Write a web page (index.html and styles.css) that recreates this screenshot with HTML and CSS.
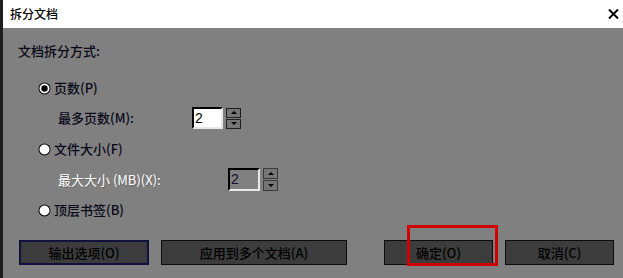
FILE: index.html
```html
<!DOCTYPE html>
<html>
<head>
<meta charset="utf-8">
<link rel="stylesheet" href="styles.css">
</head>
<body>
<div class="window">
  <div class="titlebar">
    <span class="title">拆分文档</span>
    <svg class="close" width="11" height="10" viewBox="0 0 11 10"><path d="M1 0.5 L10 9.5 M10 0.5 L1 9.5" stroke="#000" stroke-width="2" fill="none"/></svg>
  </div>
  <div class="content">
    <div class="heading">文档拆分方式:</div>
    <div class="radio-row r1">
      <svg class="radio" width="13" height="13" viewBox="0 0 13 13"><circle cx="6.5" cy="6.5" r="6" fill="#000"/><circle cx="6.5" cy="6.5" r="5" fill="#fff"/><circle cx="6.5" cy="6.5" r="3.2" fill="#000"/></svg>
      <span class="label">页数(P)</span>
    </div>
    <div class="spin-row s1">
      <span class="spin-label">最多页数(M):</span>
      <div class="input">2</div>
      <div class="spinner">
        <div class="sbtn"><span class="tri up"></span></div>
        <div class="sbtn"><span class="tri down"></span></div>
      </div>
    </div>
    <div class="radio-row r2">
      <svg class="radio" width="13" height="13" viewBox="0 0 13 13"><circle cx="6.5" cy="6.5" r="6" fill="#000"/><circle cx="6.5" cy="6.5" r="5" fill="#fff"/></svg>
      <span class="label">文件大小(F)</span>
    </div>
    <div class="spin-row s2">
      <span class="spin-label disabled">最大大小 (MB)(X):</span>
      <div class="input off">2</div>
      <div class="spinner">
        <div class="sbtn"><span class="tri up"></span></div>
        <div class="sbtn"><span class="tri down"></span></div>
      </div>
    </div>
    <div class="radio-row r3">
      <svg class="radio" width="13" height="13" viewBox="0 0 13 13"><circle cx="6.5" cy="6.5" r="6" fill="#000"/><circle cx="6.5" cy="6.5" r="5" fill="#fff"/></svg>
      <span class="label">顶层书签(B)</span>
    </div>
    <div class="buttons">
      <div class="btn b1 focus">输出选项(O)</div>
      <div class="btn b2">应用到多个文档(A)</div>
      <div class="btn b3">确定(O)</div>
      <div class="btn b4">取消(C)</div>
    </div>
  </div>
  <div class="highlight"></div>
</div>
</body>
</html>
```

FILE: styles.css
```css
html, body {
  margin: 0;
  padding: 0;
  background: #808080;
}
.window {
  position: relative;
  width: 623px;
  height: 278px;
  box-sizing: border-box;
  border-left: 3px solid #1e1e1e;
  display: flex;
  flex-direction: column;
  font-family: "Noto Sans CJK SC", "Microsoft YaHei", sans-serif;
  font-size: 13px;
  color: #000;
  overflow: hidden;
}
.titlebar {
  height: 28px;
  flex: 0 0 28px;
  background: #fff;
  display: flex;
  align-items: center;
  justify-content: space-between;
  padding: 0 4px 0 7px;
  box-sizing: border-box;
}
.title {
  font-size: 12px;
  line-height: 14px;
  margin-top: -1px;
  font-weight: 500;
}
.close {
  display: block;
  margin-top: -1px;
}
.content {
  flex: 1;
  background: #808080;
  padding-left: 15px;
  display: flex;
  flex-direction: column;
}
.heading {
  margin-top: 13px;
  height: 20px;
  line-height: 20px;
  color: #0a0a1a;
  font-weight: 500;
}
.radio-row {
  height: 20px;
  display: flex;
  align-items: center;
  margin-left: 20px;
}
.radio {
  display: block;
  flex: 0 0 13px;
  margin-right: 3px;
}
.label {
  line-height: 20px;
  color: #0a0a1a;
  font-weight: 500;
}
.r1 { margin-top: 17px; }
.r2 { margin-top: 10px; }
.r3 { margin-top: 9px; }
.spin-row {
  height: 22px;
  display: flex;
  align-items: center;
  margin-left: 40px;
}
.s1 { margin-top: 9px; }
.s2 { margin-top: 9px; height: 23px; }
.spin-label {
  line-height: 20px;
  color: #0a0a1a;
  font-weight: 500;
}
.s1 .spin-label { width: 134px; }
.s2 .spin-label { width: 170px; }
.spin-label.disabled {
  color: #fff;
  text-shadow: 1px 1px 0 #6a6a6a;
  font-weight: 400;
}
.input {
  width: 31px;
  height: 22px;
  box-sizing: border-box;
  background: #fff;
  border-top: 2px solid #000;
  border-left: 2px solid #000;
  border-right: 2px solid #e8e8e8;
  border-bottom: 2px solid #e8e8e8;
  font-family: "Liberation Sans", Arial, sans-serif;
  font-size: 14px;
  line-height: 18px;
  padding-left: 1px;
  color: #000;
}
.s2 .input {
  width: 32px;
  height: 23px;
  line-height: 19px;
}
.input.off {
  background: #808080;
  color: #10102a;
}
.spinner {
  margin-left: 3px;
  display: flex;
  flex-direction: column;
  gap: 1px;
}
.sbtn {
  width: 15px;
  height: 10px;
  box-sizing: border-box;
  border: 1px solid #1e1e1e;
  background: #767676;
  display: flex;
  align-items: center;
  justify-content: center;
}
.s2 .sbtn {
  height: 11px;
  border-color: #3a3a3a;
}
.tri {
  width: 0;
  height: 0;
  border-left: 3px solid transparent;
  border-right: 3px solid transparent;
}
.tri.up { border-bottom: 3px solid #000; }
.tri.down { border-top: 3px solid #000; }
.buttons {
  margin-top: 20px;
  height: 25px;
  display: flex;
}
.btn {
  height: 25px;
  box-sizing: border-box;
  background: #3c3c3c;
  border: 1px solid #0c0c0c;
  display: flex;
  align-items: center;
  justify-content: center;
  color: #000;
  line-height: 20px;
  font-weight: 500;
}
.btn.focus {
  border: 2px solid #10103c;
}
.b1 { width: 130px; margin-left: 1px; }
.b2 { width: 186px; margin-left: 12px; }
.b3 { width: 109px; margin-left: 37px; }
.b4 { width: 109px; margin-left: 12px; }
.highlight {
  position: absolute;
  left: 404px;
  top: 225px;
  width: 91px;
  height: 41px;
  box-sizing: border-box;
  border: 3px solid #d00000;
}
```
